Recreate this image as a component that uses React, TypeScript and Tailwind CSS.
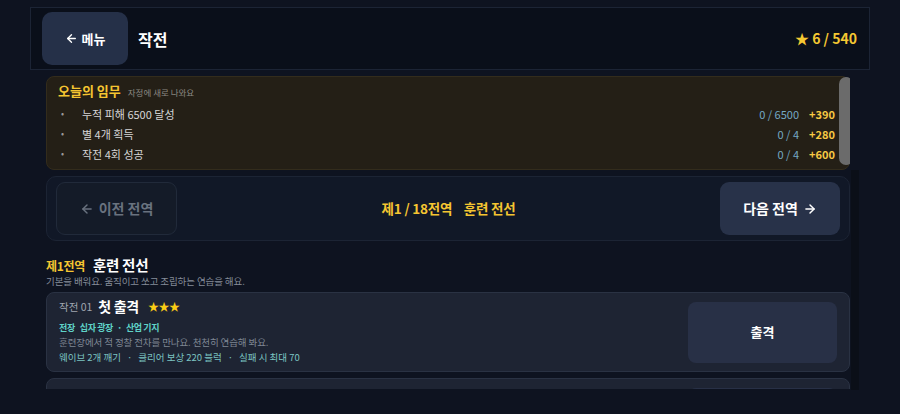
import React from "react";
import { ArrowLeft, ArrowRight } from "lucide-react";

const font = { fontFamily: '"Noto Sans CJK KR", Inter, "Noto Sans", sans-serif' };

function Mission({ label, prog, reward }: { label: string; prog: string; reward: string }) {
  return (
    <div className="flex items-center h-[20px]">
      <span className="w-[24px] pl-[3px] text-[#9a9a9a] text-[9px]">•</span>
      <span className="flex-1 text-[11px] text-[#d6d6d6]">{label}</span>
      <span className="text-[11px] text-[#74a9c4]">{prog}</span>
      <span className="w-[36px] text-right text-[11px] font-bold text-[#f7c843]">{reward}</span>
    </div>
  );
}

export default function App() {
  return (
    <div className="w-[900px] h-[414px] overflow-hidden bg-[#0e1320] relative" style={font}>
      <div className="mx-[30px] pt-[7px]">
        <header className="h-[63px] border border-[#1c2435] bg-[#0a0f1a] flex items-center pl-[11px] pr-[12px]">
          <button className="w-[86px] h-[53px] rounded-[10px] bg-[#253048] text-white text-[13px] font-semibold flex items-center justify-center gap-[4px]">
            <ArrowLeft size={13} strokeWidth={2.5} />
            <span>메뉴</span>
          </button>
          <h1 className="ml-[10px] text-[16px] font-bold text-white">작전</h1>
          <div className="ml-auto text-[14px] font-bold text-[#f5c832]">★ 6 / 540</div>
        </header>
      </div>

      <div className="relative mt-[6px] ml-[46px] w-[804px] h-[313px] overflow-hidden">
        <div className="flex flex-col">
          <section className="h-[94px] rounded-[8px] bg-[#241f16] border border-[#332c1c] pl-[11px] pr-[14px] pt-[4px]">
            <div className="flex items-baseline gap-[7px] h-[22px]">
              <span className="text-[13px] font-bold text-[#f5c531]">오늘의 임무</span>
              <span className="text-[8.5px] text-[#8d8a84]">자정에 새로 나와요</span>
            </div>
            <div className="mt-[1px]">
              <Mission label="누적 피해 6500 달성" prog="0 / 6500" reward="+390" />
              <Mission label="별 4개 획득" prog="0 / 4" reward="+280" />
              <Mission label="작전 4회 성공" prog="0 / 4" reward="+600" />
            </div>
          </section>

          <nav className="mt-[6px] h-[65px] rounded-[10px] bg-[#111827] border border-[#1c2434] flex items-center px-[9px]">
            <button className="w-[121px] h-[53px] rounded-[9px] bg-[#141b28] border border-[#212a3a] text-[#69727f] text-[14px] font-semibold flex items-center justify-center gap-[5px]">
              <ArrowLeft size={14} strokeWidth={2.5} />
              <span>이전 전역</span>
            </button>
            <div className="flex-1 text-center text-[13.5px] font-bold text-[#f5c531] tracking-[-0.2px]">
              제1 / 18전역&nbsp;&nbsp;&nbsp;&nbsp;훈련 전선
            </div>
            <button className="w-[120px] h-[53px] rounded-[9px] bg-[#283249] text-white text-[14px] font-semibold flex items-center justify-center gap-[5px]">
              <span>다음 전역</span>
              <ArrowRight size={14} strokeWidth={2.5} />
            </button>
          </nav>

          <div className="mt-[13px] flex items-baseline gap-[8px] h-[18px]">
            <span className="text-[12px] font-bold text-[#f5c531] tracking-[-0.3px]">제1전역</span>
            <span className="text-[14.5px] font-bold text-white tracking-[-0.3px]">훈련 전선</span>
          </div>
          <div className="mt-[2px] text-[9.5px] tracking-[-0.1px] text-[#858c99] h-[14px]">기본을 배워요. 움직이고 쏘고 조립하는 연습을 해요.</div>

          <article className="mt-[4px] h-[80px] rounded-[8px] bg-[#1e2433] border border-[#2a3243] flex items-center pl-[12px] pr-[12px]">
            <div className="flex-1 flex flex-col">
              <div className="flex items-center h-[20px] -mt-[3px] mb-[3px]">
                <span className="text-[10.5px] text-[#a0a6b0]">작전 01</span>
                <span className="ml-[6px] text-[14px] font-bold text-white tracking-[-0.3px]">첫 출격</span>
                <span className="ml-[9px] text-[11px] text-[#facc15] tracking-[-0.5px]">★★★</span>
              </div>
              <div className="flex text-[9px] font-bold text-[#5fd3c8] h-[15px] leading-[15px] tracking-[-0.4px]">
                <span>전장</span>
                <span className="ml-[5px]">십자 광장</span>
                <span className="ml-[4px]">·</span>
                <span className="ml-[4px]">산업 기지</span>
              </div>
              <div className="text-[9.5px] text-[#7f8794] h-[14px] leading-[14px] tracking-[-0.1px]">훈련장에서 적 정찰 전차를 만나요. 천천히 연습해 봐요.</div>
              <div className="flex text-[9.5px] text-[#7cc4c2] h-[16px] leading-[16px]">
                <span>웨이브 2개 깨기</span>
                <span className="mx-[6px]">·</span>
                <span>클리어 보상 220 블럭</span>
                <span className="mx-[6px]">·</span>
                <span>실패 시 최대 70</span>
              </div>
            </div>
            <button className="w-[149px] h-[61px] rounded-[8px] bg-[#283046] text-white text-[13px] font-bold">출격</button>
          </article>

          <article className="mt-[6px] h-[80px] rounded-[8px] bg-[#1e2433] border border-[#2a3243] flex pl-[12px] pr-[12px] pt-[6px]">
            <div className="flex-1 flex items-center h-[20px]">
              <span className="text-[10.5px] text-[#a0a6b0]">작전 02</span>
              <span className="ml-[6px] text-[14px] font-bold text-white">추의 진화</span>
              <span className="ml-[9px] text-[11px] text-[#4b5563] tracking-[-0.5px]">★★★</span>
            </div>
            <div className="w-[149px] h-[61px] rounded-[8px] bg-[#283046] mt-[3px]"></div>
          </article>
        </div>
        <div className="absolute left-[793px] top-[1px] w-[14px] h-[88px] rounded-full bg-[#6b6b6b]"></div>
      </div>
      <div className="absolute left-[851px] top-[170px] w-[8px] h-[220px] bg-[#0b0f18]"></div>
    </div>
  );
}
